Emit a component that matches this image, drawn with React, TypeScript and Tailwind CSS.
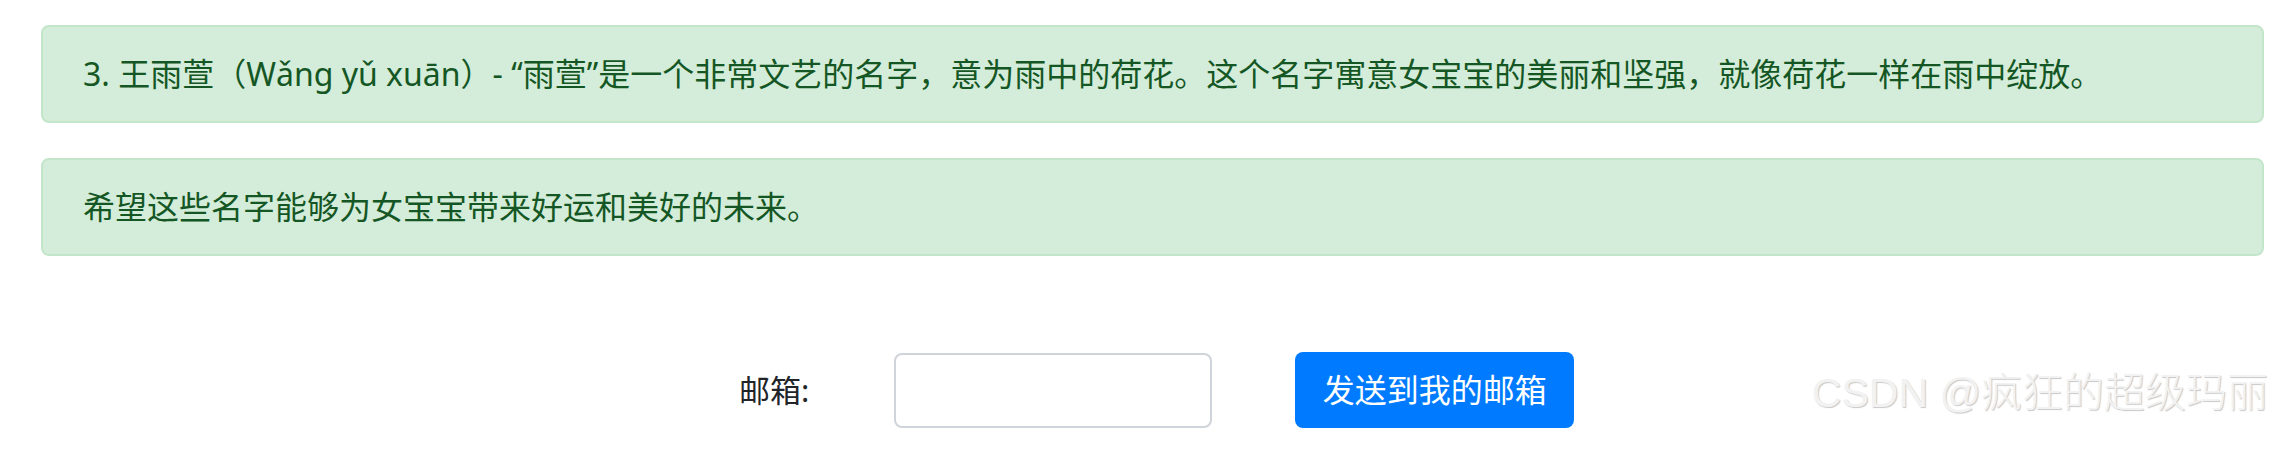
const font = "font-['Noto_Sans','Noto_Sans_CJK_SC',sans-serif]";

const Alert = ({ children }: { children: React.ReactNode }) => (
  <div className="rounded-[8px] border-2 border-[#c3e6cb] bg-[#d4edda] px-[40px] py-[23px] text-[32px] leading-[48px] text-[#155724]">
    {children}
  </div>
);

export default function App() {
  return (
    <div className={`relative h-[472px] w-[2292px] overflow-hidden bg-white ${font}`}>
      <div className="flex flex-col gap-[35px] pl-[41px] pr-[28px] pt-[25px]">
        <Alert>
          3. 王雨萱（Wǎng yǔ xuān）- “雨萱”是一个非常文艺的名字，意为雨中的荷花。这个名字寓意女宝宝的美丽和坚强，就像荷花一样在雨中绽放。
        </Alert>
        <Alert>希望这些名字能够为女宝宝带来好运和美好的未来。</Alert>
      </div>

      <div className="mt-[96px] flex items-center pl-[739px]">
        <label className="text-[31px] leading-[48px] text-[#212529]">邮箱:</label>
        <input
          type="text"
          className="ml-[85px] h-[75px] w-[318px] rounded-[8px] border-2 border-[#ced4da] bg-white px-[24px] text-[31px] outline-none"
        />
        <button className="ml-[83px] h-[76px] w-[279px] rounded-[8px] bg-[#007bff] text-[32px] leading-[48px] text-white">
          发送到我的邮箱
        </button>
      </div>

      <div className="absolute bottom-[58px] right-[24px] text-[41px] font-light leading-none text-[#f2f2f2] [text-shadow:1px_1px_1px_rgba(0,0,0,0.22)] font-['Liberation_Sans','Noto_Sans_CJK_SC',sans-serif]">
        CSDN @疯狂的超级玛丽
      </div>
    </div>
  );
}
